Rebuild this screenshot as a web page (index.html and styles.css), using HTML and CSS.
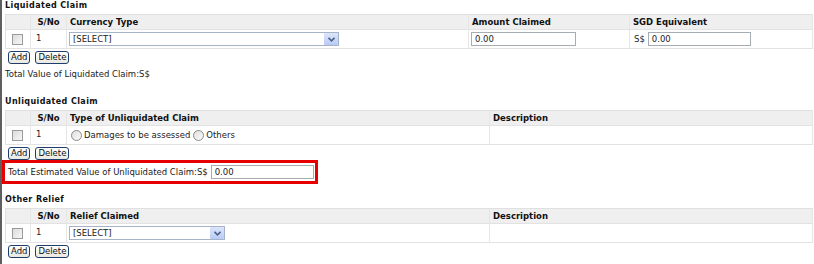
FILE: index.html
```html
<!DOCTYPE html>
<html>
<head>
<meta charset="utf-8">
<link rel="stylesheet" href="styles.css">
</head>
<body>
<div class="page">
  <section class="sec">
    <div class="sec-title">Liquidated Claim</div>
    <div class="grid g5">
      <div class="th"></div><div class="th c">S/No</div><div class="th">Currency Type</div><div class="th">Amount Claimed</div><div class="th">SGD Equivalent</div>
      <div class="td chk"><span class="cb"></span></div>
      <div class="td no">1</div>
      <div class="td"><span class="sel w-cur"><span class="sel-txt">[SELECT]</span><span class="sel-btn"><svg width="7" height="5" viewBox="0 0 7 5"><path d="M0.5 0.8 L3.5 3.8 L6.5 0.8" fill="none" stroke="#4d6185" stroke-width="1.6"/></svg></span></span></div>
      <div class="td"><span class="inp w-amt">0.00</span></div>
      <div class="td"><span class="pre">S$</span><span class="inp w-sgd">0.00</span></div>
    </div>
    <div class="btns"><button class="btn">Add</button><button class="btn">Delete</button></div>
    <div class="total">Total Value of Liquidated Claim:S$</div>
  </section>

  <section class="sec">
    <div class="sec-title">Unliquidated Claim</div>
    <div class="grid g4">
      <div class="th"></div><div class="th c">S/No</div><div class="th">Type of Unliquidated Claim</div><div class="th">Description</div>
      <div class="td chk"><span class="cb"></span></div>
      <div class="td no">1</div>
      <div class="td rads"><span class="rad"></span><span class="rlbl">Damages to be assessed</span><span class="rad"></span><span class="rlbl">Others</span></div>
      <div class="td"></div>
    </div>
    <div class="btns"><button class="btn">Add</button><button class="btn">Delete</button></div>
    <div class="hl">Total Estimated Value of Unliquidated Claim:S$ <span class="inp w-est">0.00</span></div>
  </section>

  <section class="sec sec-other">
    <div class="sec-title">Other Relief</div>
    <div class="grid g4">
      <div class="th"></div><div class="th c">S/No</div><div class="th">Relief Claimed</div><div class="th">Description</div>
      <div class="td chk"><span class="cb"></span></div>
      <div class="td no">1</div>
      <div class="td"><span class="sel w-rel"><span class="sel-txt">[SELECT]</span><span class="sel-btn"><svg width="7" height="5" viewBox="0 0 7 5"><path d="M0.5 0.8 L3.5 3.8 L6.5 0.8" fill="none" stroke="#4d6185" stroke-width="1.6"/></svg></span></span></div>
      <div class="td"></div>
    </div>
    <div class="btns"><button class="btn">Add</button><button class="btn">Delete</button></div>
  </section>
</div>
</body>
</html>
```

FILE: styles.css
```css
html, body {
  margin: 0;
  padding: 0;
  background: #ffffff;
}
body {
  font-family: "DejaVu Sans", Verdana, sans-serif;
  font-size: 8.5px;
  color: #222;
}
.page {
  border-left: 2px solid #5f5f5f;
  height: 264px;
  padding-left: 3px;
  box-sizing: border-box;
  width: 814px;
  overflow: hidden;
}
.sec-title {
  font-weight: bold;
  font-size: 8px;
  letter-spacing: 0.4px;
  height: 14px;
  line-height: 12px;
  color: #111;
}
.grid {
  display: grid;
  width: 808px;
  box-sizing: border-box;
  border-top: 1px solid #e0e0e0;
  border-left: 1px solid #e0e0e0;
}
.g5 { grid-template-columns: 25px 36px 402px 161px 1fr; }
.g4 { grid-template-columns: 25px 36px 423px 1fr; }
.th, .td {
  box-sizing: border-box;
  border-right: 1px solid #e6e6e6;
  border-bottom: 1px solid #e2e2e2;
  display: flex;
  align-items: center;
  padding: 0 2px;
  white-space: nowrap;
}
.th {
  height: 15px;
  background: #efefef;
  font-weight: bold;
  color: #111;
  padding-left: 3px;
}
.th.c { justify-content: center; padding: 0; }
.td {
  height: 19px;
  background: #fff;
}
.td.no {
  align-items: flex-start;
  padding-top: 3px;
  padding-left: 5px;
}
.td.chk { padding-left: 6px; }
.cb {
  display: block;
  width: 9px;
  height: 9px;
  border: 1px solid #9a9a9a;
  background: linear-gradient(135deg, #dcdcdc, #f6f6f6);
}
.sel {
  display: flex;
  align-items: center;
  height: 14px;
  border: 1px solid #a6b2c6;
  background: #fff;
  box-sizing: border-box;
}
.sel-txt {
  flex: 1;
  padding-left: 3px;
  line-height: 12px;
}
.sel-btn {
  width: 14px;
  height: 12px;
  margin-right: 0;
  background: linear-gradient(#dce5fb, #b9cbf5);
  border-radius: 1px;
  display: flex;
  align-items: center;
  justify-content: center;
}
.w-cur { width: 270px; }
.w-rel { width: 156px; }
.inp {
  display: inline-block;
  height: 14px;
  line-height: 12px;
  border: 1px solid #a5acb2;
  box-sizing: border-box;
  padding-left: 3px;
  background: #fff;
}
.w-amt { width: 105px; }
.w-sgd { width: 103px; }
.w-est { width: 103px; }
.pre { margin: 0 3px 0 2px; }
.rads { padding-left: 4px; }
.rad {
  display: inline-block;
  width: 9px;
  height: 9px;
  border: 1px solid #8a8a8a;
  border-radius: 50%;
  background: linear-gradient(135deg, #e0e0e0, #fafafa);
  margin-right: 2px;
}
.rlbl { margin-right: 3px; }
.btns {
  display: flex;
  gap: 5px;
  margin-top: 2px;
  padding-left: 3px;
  height: 13px;
}
.btn {
  font-family: "DejaVu Sans", Verdana, sans-serif;
  font-size: 8.5px;
  color: #111;
  height: 13px;
  line-height: 11px;
  padding: 0 2px;
  border: 1px solid #1e3e6c;
  border-radius: 3px;
  background: linear-gradient(#ffffff, #e9e8e0);
  margin: 0;
}
.total {
  height: 32px;
  box-sizing: border-box;
  line-height: 14px;
  padding-top: 3px;
}
.hl {
  border: 3px solid #e60000;
  width: 316px;
  height: 24px;
  box-sizing: border-box;
  margin-left: -3px;
  padding-left: 3px;
  display: flex;
  align-items: center;
  gap: 3px;
}
.sec-other { margin-top: 10px; }
```
